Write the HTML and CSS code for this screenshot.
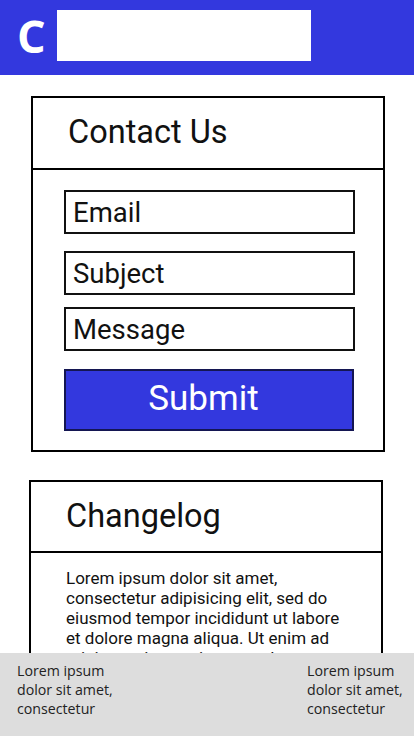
FILE: index.html
```html
<!DOCTYPE html>
<html lang="en">
<head>
<meta charset="utf-8">
<meta name="viewport" content="width=device-width, initial-scale=1">
<title>Contact</title>
<link rel="stylesheet" href="styles.css">
</head>
<body>
<header class="topbar">
  <div class="logo">C</div>
  <div class="search"></div>
</header>

<main class="content">
  <section class="card card-contact">
    <div class="card-head"><h2 class="card-title">Contact Us</h2></div>
    <form class="card-body form">
      <div class="field field-email">Email</div>
      <div class="field field-subject">Subject</div>
      <div class="field field-message">Message</div>
      <div class="submit">Submit</div>
    </form>
  </section>

  <section class="card card-changelog">
    <div class="card-head"><h2 class="card-title">Changelog</h2></div>
    <div class="card-body log">
      <p class="log-text">Lorem ipsum dolor sit amet, consectetur adipisicing elit, sed do eiusmod tempor incididunt ut labore et dolore magna aliqua. Ut enim ad minim veniam, quis nostrud exercitation ullamco laboris nisi ut aliquip ex ea commodo consequat. Duis aute irure dolor in reprehenderit in voluptate velit esse cillum dolore eu fugiat nulla pariatur.</p>
    </div>
  </section>
</main>

<footer class="footer">
  <div class="foot-col">Lorem ipsum dolor sit amet, consectetur</div>
  <div class="foot-col">Lorem ipsum dolor sit amet, consectetur</div>
</footer>
</body>
</html>
```

FILE: styles.css
```css
* { box-sizing: border-box; }

html, body {
  margin: 0;
  padding: 0;
}

body {
  font-family: Roboto, "Liberation Sans", sans-serif;
  color: #111;
  background: #fff;
  padding-bottom: 100px;
}

.topbar {
  height: 75px;
  background: #3338de;
  display: flex;
  align-items: flex-start;
  padding: 10px 0 0 17px;
}

.logo {
  font-family: "Open Sans", sans-serif;
  font-weight: 700;
  font-size: 45px;
  line-height: 51px;
  color: #fff;
  width: 40px;
}

.search {
  width: 254px;
  height: 51px;
  background: #fff;
}

.content {
  display: flex;
  flex-direction: column;
}

.card {
  width: 354px;
  border: 2px solid #000;
}

.card-contact {
  margin: 21px 0 0 31px;
}

.card-changelog {
  margin: 28px 0 0 29px;
}

.card-head {
  height: 72px;
  border-bottom: 2px solid #000;
  display: flex;
  align-items: center;
  padding-left: 35px;
  padding-bottom: 3px;
}

.card-changelog .card-head {
  height: 71px;
  padding-bottom: 2px;
}

.card-title {
  margin: 0;
  font-weight: 400;
  font-size: 32.5px;
  color: #111;
}

.form {
  display: flex;
  flex-direction: column;
  padding: 20px 0 19px 31px;
}

.field {
  width: 291px;
  height: 44px;
  border: 2px solid #111;
  padding-left: 7px;
  display: flex;
  align-items: center;
  font-size: 27.5px;
  color: #111;
}

.field-subject { margin-top: 17px; }
.field-message { margin-top: 12px; }

.submit {
  margin-top: 18px;
  width: 290px;
  height: 62px;
  background: #3338de;
  border: 2px solid #141652;
  color: #fff;
  font-size: 35px;
  display: flex;
  align-items: center;
  justify-content: center;
  padding-right: 11px;
  padding-bottom: 3px;
}

.log {
  padding: 15px 30px 20px 35px;
}

.log-text {
  margin: 0;
  font-size: 17px;
  line-height: 20px;
  color: #111;
}

.footer {
  position: fixed;
  left: 0;
  right: 0;
  bottom: 0;
  height: 83px;
  background: #dddddd;
  display: flex;
  justify-content: space-between;
  padding: 8px 7px 0 17px;
  font-family: "Open Sans", sans-serif;
  font-size: 14.2px;
  line-height: 19px;
  color: #222;
}

.foot-col {
  width: 100px;
}
```
